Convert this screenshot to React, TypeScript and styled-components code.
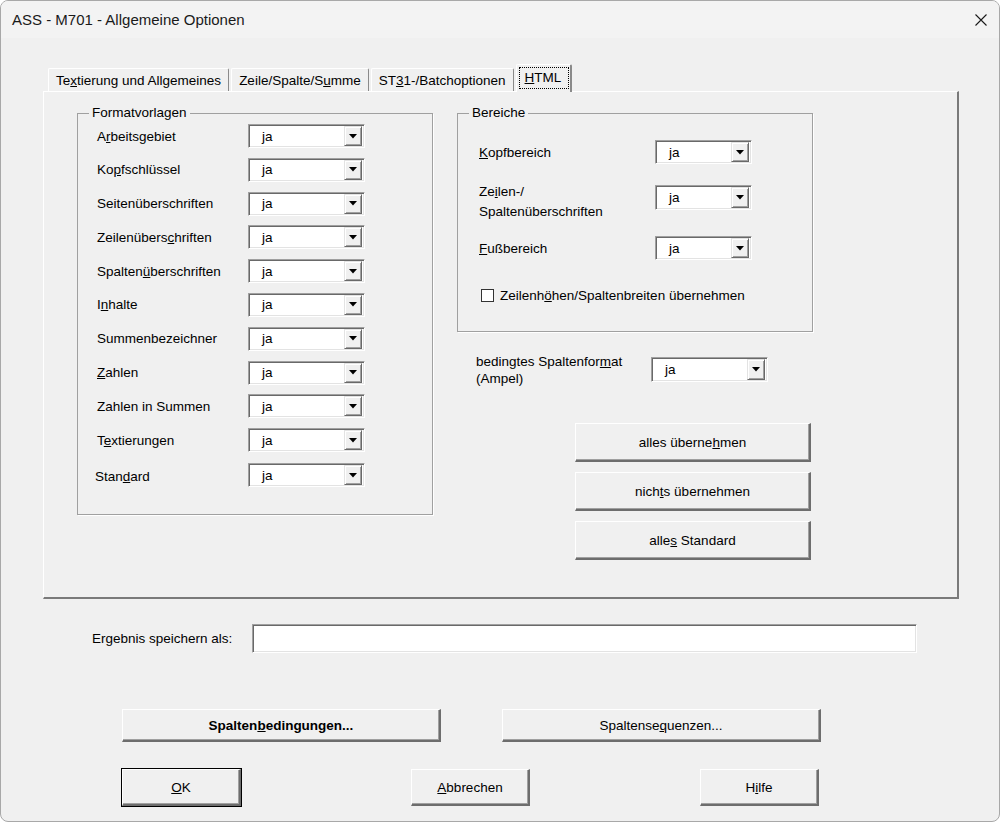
import React from "react";
import styled, { createGlobalStyle } from "styled-components";

const GlobalStyle = createGlobalStyle`
  html, body {
    margin: 0;
    padding: 0;
    background: #ffffff;
  }
  body {
    font-family: "Liberation Sans", Arial, sans-serif;
    font-size: 13.5px;
    color: #000;
  }
  * { box-sizing: border-box; }
`;

const Window = styled.div`
  width: 1000px;
  height: 822px;
  border: 1px solid #a8a8a8;
  border-radius: 8px;
  overflow: hidden;
  background: #f0f0f0;
  display: flex;
  flex-direction: column;
`;

const TitleBar = styled.div`
  height: 37px;
  flex: none;
  display: flex;
  align-items: center;
  justify-content: space-between;
  padding: 0 12px 0 11px;
  background: #f3f3f3;
  font-size: 15px;
  color: #1a1a1a;
`;

const CloseIcon = styled.svg`
  width: 12px;
  height: 12px;
  margin-top: 1px;
`;

const Client = styled.div`
  flex: 1;
  display: flex;
  flex-direction: column;
  padding: 26px 0 0 42px;
`;

const TabControl = styled.div`
  width: 916px;
`;

const TabStrip = styled.div`
  display: flex;
  align-items: flex-end;
  gap: 2px;
  height: 27px;
  padding-left: 5px;
  position: relative;
  z-index: 1;
`;

const Tab = styled.div<{ $active?: boolean }>`
  height: ${(p) => (p.$active ? "28px" : "23px")};
  margin-bottom: ${(p) => (p.$active ? "-1px" : "0")};
  padding: ${(p) => (p.$active ? "2px 1px 0 2px" : "3px 7px 0 7px")};
  background: #f0f0f0;
  border-top: 1px solid #ffffff;
  border-left: 1px solid #ffffff;
  border-right: ${(p) => (p.$active ? "2px solid #8a8a8a" : "1px solid #8a8a8a")};
  border-top-left-radius: 2px;
  border-top-right-radius: 2px;
  white-space: nowrap;
  line-height: 17px;
`;

const FocusRect = styled.span`
  display: inline-block;
  border: 1px dotted #000;
  padding: 1px 7px 2px 5px;
`;

const Page = styled.div`
  height: 508px;
  display: flex;
  gap: 24px;
  padding: 13px 0 0 33px;
  border-top: 1px solid #ffffff;
  border-left: 1px solid #ffffff;
  border-right: 2px solid #7a7a7a;
  border-bottom: 2px solid #7a7a7a;
`;

const Group = styled.fieldset<{ $height: number }>`
  width: 356px;
  height: ${(p) => p.$height}px;
  margin: 0;
  padding: 0;
  border: 1px solid #a0a0a0;
  box-shadow: 1px 1px 0 #ffffff;
  min-width: 0;
`;

const Legend = styled.legend`
  margin-left: 11px;
  padding: 0 3px;
  line-height: 16px;
`;

const FormatGrid = styled.div`
  display: grid;
  grid-template-columns: 151px 117px;
  grid-auto-rows: 24px;
  row-gap: 9.8px;
  align-items: center;
  padding: 3px 0 0 19px;
`;

const Label = styled.div<{ $shift?: number }>`
  white-space: nowrap;
  line-height: 17px;
  margin-left: ${(p) => p.$shift ?? 0}px;
  margin-top: ${(p) => (p.$shift ? 6 : 0)}px;
`;

const ComboBox = styled.div<{ $width: number; $height?: number; $top?: number }>`
  width: ${(p) => p.$width}px;
  height: ${(p) => p.$height ?? 24}px;
  margin-top: ${(p) => p.$top ?? 0}px;
  display: flex;
  background: #ffffff;
  border-top: 1px solid #a0a0a0;
  border-left: 1px solid #a0a0a0;
  border-right: 1px solid #ffffff;
  border-bottom: 1px solid #ffffff;
  box-shadow: inset 1px 1px 0 #696969, inset -1px -1px 0 #e3e3e3;
  padding: 1px 2px 1px 1px;
`;

const ComboValue = styled.div`
  flex: 1;
  padding-left: 12px;
  display: flex;
  align-items: center;
  line-height: 17px;
`;

const DropButton = styled.div`
  width: 18px;
  flex: none;
  display: flex;
  align-items: center;
  justify-content: center;
  background: #f0f0f0;
  border-top: 1px solid #e3e3e3;
  border-left: 1px solid #e3e3e3;
  border-right: 1px solid #696969;
  border-bottom: 1px solid #696969;
  box-shadow: inset 1px 1px 0 #ffffff, inset -1px -1px 0 #a0a0a0;
`;

const RightColumn = styled.div`
  width: 357px;
  display: flex;
  flex-direction: column;
`;

const BereichBody = styled.div`
  display: flex;
  flex-direction: column;
  padding: 19px 0 0 21px;
`;

const BereichRow = styled.div<{ $top: number }>`
  display: grid;
  grid-template-columns: 176px 97px;
  align-items: start;
  margin-top: ${(p) => p.$top}px;
`;

const RowLabel = styled.div<{ $top?: number; $lh?: number }>`
  line-height: ${(p) => p.$lh ?? 19}px;
  padding-top: ${(p) => p.$top ?? 0}px;
`;

const CheckRow = styled.label`
  display: flex;
  align-items: center;
  gap: 6px;
  margin: 26px 0 0 2px;
  line-height: 19px;
  white-space: nowrap;
`;

const CheckBox = styled.span`
  width: 13px;
  height: 13px;
  background: #ffffff;
  border: 1px solid #333333;
  flex: none;
`;

const AmpelRow = styled.div`
  display: grid;
  grid-template-columns: 175px 117px;
  align-items: start;
  margin: 21px 0 0 19px;
`;

const ActionStack = styled.div`
  display: flex;
  flex-direction: column;
  gap: 10px;
  margin: 36px 0 0 118px;
`;

const Button = styled.div<{ $width: number; $height: number; $bold?: boolean; $default?: boolean }>`
  width: ${(p) => p.$width}px;
  height: ${(p) => p.$height}px;
  display: flex;
  align-items: center;
  justify-content: center;
  background: #f0f0f0;
  font-weight: ${(p) => (p.$bold ? "bold" : "normal")};
  white-space: nowrap;
  border-top: 1px solid #ffffff;
  border-left: 1px solid #ffffff;
  border-right: 2px solid #6d6d6d;
  border-bottom: 2px solid #6d6d6d;
  box-shadow: inset -1px -1px 0 #a0a0a0;
  outline: ${(p) => (p.$default ? "1px solid #000" : "none")};
`;

const SaveRow = styled.div`
  display: flex;
  align-items: center;
  margin: 25px 0 0 49px;
`;

const SaveLabel = styled.div`
  width: 160px;
  line-height: 17px;
`;

const TextField = styled.div`
  width: 665px;
  height: 29px;
  background: #ffffff;
  border-top: 1px solid #a0a0a0;
  border-left: 1px solid #a0a0a0;
  border-right: 1px solid #ffffff;
  border-bottom: 1px solid #ffffff;
  box-shadow: inset 1px 1px 0 #696969, inset -1px -1px 0 #e3e3e3;
`;

const ButtonRow = styled.div<{ $top: number; $gap: number }>`
  display: flex;
  gap: ${(p) => p.$gap}px;
  margin: ${(p) => p.$top}px 0 0 79px;
`;

const Arrow = () => (
  <svg width="8" height="5" viewBox="0 0 8 5">
    <polygon points="0,0 8,0 4,4.5" fill="#000" />
  </svg>
);

const Combo = ({ width, height, top }: { width: number; height?: number; top?: number }) => (
  <ComboBox $width={width} $height={height} $top={top}>
    <ComboValue>ja</ComboValue>
    <DropButton>
      <Arrow />
    </DropButton>
  </ComboBox>
);

const formatRows: { label: React.ReactNode; shift?: number }[] = [
  { label: <>A<u>r</u>beitsgebiet</> },
  { label: <>Ko<u>p</u>fschlüssel</> },
  { label: <>Seitenüberschriften</> },
  { label: <>Zeilenübers<u>c</u>hriften</> },
  { label: <>Spalten<u>ü</u>berschriften</> },
  { label: <>I<u>n</u>halte</> },
  { label: <>Summenbezeichner</> },
  { label: <><u>Z</u>ahlen</> },
  { label: <>Zahlen in Summen</> },
  { label: <>T<u>e</u>xtierungen</> },
  { label: <>Stan<u>d</u>ard</>, shift: -2 },
];

const App = () => {
  return (
    <>
      <GlobalStyle />
      <Window>
        <TitleBar>
          <span>ASS - M701 - Allgemeine Optionen</span>
          <CloseIcon viewBox="0 0 12 12">
            <path d="M0.5 0.5 L11.5 11.5 M11.5 0.5 L0.5 11.5" stroke="#1a1a1a" strokeWidth="1.1" fill="none" />
          </CloseIcon>
        </TitleBar>
        <Client>
          <TabControl>
            <TabStrip>
              <Tab>Te<u>x</u>tierung und Allgemeines</Tab>
              <Tab>Zeile/Spalte/S<u>u</u>mme</Tab>
              <Tab>ST<u>3</u>1-/Batchoptionen</Tab>
              <Tab $active>
                <FocusRect><u>H</u>TML</FocusRect>
              </Tab>
            </TabStrip>
            <Page>
              <Group $height={410}>
                <Legend>Formatvorlagen</Legend>
                <FormatGrid>
                  {formatRows.map((row, i) => (
                    <React.Fragment key={i}>
                      <Label $shift={row.shift}>{row.label}</Label>
                      <Combo width={117} top={row.shift ? 3 : 0} />
                    </React.Fragment>
                  ))}
                </FormatGrid>
              </Group>
              <RightColumn>
                <Group $height={227}>
                  <Legend>Bereiche</Legend>
                  <BereichBody>
                    <BereichRow $top={0}>
                      <RowLabel $top={3}><u>K</u>opfbereich</RowLabel>
                      <Combo width={97} />
                    </BereichRow>
                    <BereichRow $top={18}>
                      <RowLabel $lh={20}>
                        Ze<u>i</u>len-/
                        <br />
                        Spaltenüberschriften
                      </RowLabel>
                      <Combo width={97} height={25} top={3} />
                    </BereichRow>
                    <BereichRow $top={14}>
                      <RowLabel $top={3}><u>F</u>ußbereich</RowLabel>
                      <Combo width={97} />
                    </BereichRow>
                    <CheckRow>
                      <CheckBox />
                      <span>Zeilenh<u>ö</u>hen/Spaltenbreiten übernehmen</span>
                    </CheckRow>
                  </BereichBody>
                </Group>
                <AmpelRow>
                  <RowLabel $lh={17}>
                    bedingtes Spaltenfor<u>m</u>at
                    <br />
                    (Ampel)
                  </RowLabel>
                  <Combo width={117} height={25} top={4} />
                </AmpelRow>
                <ActionStack>
                  <Button $width={236} $height={39}><span>alles überne<u>h</u>men</span></Button>
                  <Button $width={236} $height={39}><span>nich<u>t</u>s übernehmen</span></Button>
                  <Button $width={236} $height={39}><span>alle<u>s</u> Standard</span></Button>
                </ActionStack>
              </RightColumn>
            </Page>
          </TabControl>
          <SaveRow>
            <SaveLabel>Ergebnis speichern als:</SaveLabel>
            <TextField />
          </SaveRow>
          <ButtonRow $top={56} $gap={61}>
            <Button $width={319} $height={33} $bold><span>Spalten<u>b</u>edingungen...</span></Button>
            <Button $width={319} $height={33}><span>Spaltense<u>q</u>uenzen...</span></Button>
          </ButtonRow>
          <ButtonRow $top={27} $gap={170}>
            <Button $width={119} $height={37} $default><span><u>O</u>K</span></Button>
            <Button $width={119} $height={37}><span><u>A</u>bbrechen</span></Button>
            <Button $width={119} $height={37}><span>H<u>i</u>lfe</span></Button>
          </ButtonRow>
        </Client>
      </Window>
    </>
  );
};

export default App;
